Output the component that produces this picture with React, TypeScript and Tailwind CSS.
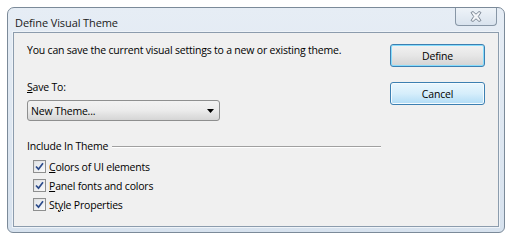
import React from "react";

const font = { fontFamily: '"Open Sans", "Noto Sans", sans-serif' };

function CloseButton() {
  return (
    <div className="mr-[7px] flex h-[18px] w-[42px] items-center justify-center rounded-b-[4px] border border-t-0 border-[#8796a6] bg-gradient-to-b from-[#eef3f8] to-[#d9e3ee]">
      <svg width="12" height="11" viewBox="0 0 12 11">
        <path
          d="M1 1.5 L3 0.5 L6 3.2 L9 0.5 L11 1.5 L8.3 5.5 L11 9.5 L9 10.5 L6 7.8 L3 10.5 L1 9.5 L3.7 5.5 Z"
          fill="#f4f6f9"
          stroke="#7d8896"
          strokeWidth="1"
          strokeLinejoin="round"
        />
      </svg>
    </div>
  );
}

function Checkbox({ children }: { children: React.ReactNode }) {
  return (
    <div className="flex h-[19px] items-center">
      <div className="ml-[6px] mr-[3px] flex h-[13px] w-[13px] items-center justify-center border border-[#8e8f8f] bg-gradient-to-br from-[#dcdcdc] to-[#fbfbfb] p-[1px]">
        <div className="flex h-full w-full items-center justify-center bg-gradient-to-br from-[#e3e6ea] to-[#f6f7f8]">
          <svg width="9" height="9" viewBox="0 0 9 9">
            <path d="M1 4.5 L3.5 7.2 L8 1.2" fill="none" stroke="#2b4a8a" strokeWidth="1.7" />
          </svg>
        </div>
      </div>
      <span>{children}</span>
    </div>
  );
}

function DialogButton({ label, variant }: { label: string; variant: "default" | "hover" }) {
  const fill =
    variant === "default"
      ? "bg-gradient-to-b from-[#f2f2f2] via-[#e6e6e6] to-[#d3d3d3] shadow-[inset_0_0_0_1px_#86dcfc]"
      : "bg-gradient-to-b from-[#eaf6fd] via-[#d6eefb] to-[#b1dcf6] shadow-[inset_0_0_0_1px_#f5fbfe]";
  return (
    <div
      className={`flex h-[23px] w-[95px] items-center justify-center rounded-[3px] border border-[#3c7fb1] ${fill}`}
    >
      {label}
    </div>
  );
}

export default function App() {
  return (
    <div
      className="h-[240px] w-[513px] bg-white pl-[7px] pt-[7px] text-[10.5px] leading-[16px] tracking-[-0.2px] text-black"
      style={font}
    >
      <div className="flex h-[226px] w-[498px] flex-col rounded-t-[7px] rounded-b-[6px] border border-[#7b8a99] bg-gradient-to-b from-[#e6edf5] to-[#d7e2ee]">
        <div className="flex h-[24px] items-start justify-between">
          <span className="ml-[7px] mt-[7px] text-[11px] tracking-[-0.1px] text-[#1a1a1a]">Define Visual Theme</span>
          <CloseButton />
        </div>
        <div className="mx-[5px] mb-[5px] flex flex-1 justify-between border border-[#8c9cad] bg-[#f0f0f0] shadow-[0_0_0_1px_#eef3f8]">
          <div className="pl-[13px] pt-[9px]">
            <div>You can save the current visual settings to a new or existing theme.</div>
            <div className="mt-[21px]">
              <span className="underline">S</span>ave To:
            </div>
            <div className="mt-[5px] flex h-[21px] w-[193px] items-center justify-between rounded-[3px] border border-[#8e8f8f] bg-gradient-to-b from-[#f2f2f2] via-[#ebebeb] to-[#d5d5d5] pl-[3px] pr-[5px]">
              <span>New Theme...</span>
              <svg width="7" height="4" viewBox="0 0 7 4">
                <path d="M0 0 H7 L3.5 4 Z" fill="#000" />
              </svg>
            </div>
            <div className="mt-[17px] flex w-[354px] items-center">
              <span>Include In Theme</span>
              <div className="ml-[4px] h-px flex-1 bg-[#a0a0a0] shadow-[0_1px_0_#ffffff]" />
            </div>
            <div className="mt-[3px]">
              <Checkbox>
                <span className="underline">C</span>olors of UI elements
              </Checkbox>
              <Checkbox>
                <span className="underline">P</span>anel fonts and colors
              </Checkbox>
              <Checkbox>
                St<span className="underline">y</span>le Properties
              </Checkbox>
            </div>
          </div>
          <div className="flex flex-col gap-[15px] pr-[13px] pt-[11px]">
            <DialogButton label="Define" variant="default" />
            <DialogButton label="Cancel" variant="hover" />
          </div>
        </div>
      </div>
    </div>
  );
}
